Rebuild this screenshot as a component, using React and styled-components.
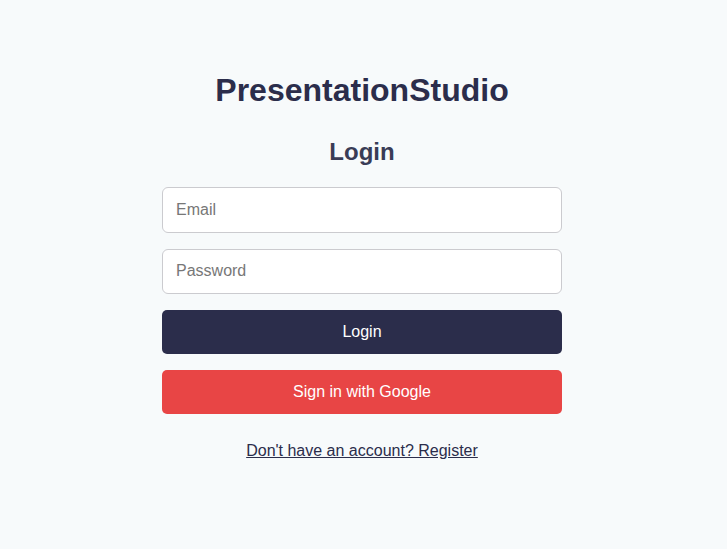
import React from "react";
import styled, { createGlobalStyle } from "styled-components";

const Global = createGlobalStyle`
  html, body { margin: 0; padding: 0; }
  body {
    background: #f7fafb;
    font-family: "Liberation Sans", Arial, sans-serif;
    color: #2b2d4b;
  }
  * { box-sizing: border-box; }
`;

const Page = styled.div`
  min-height: 100vh;
  display: flex;
  justify-content: center;
  padding: 72px 3px 0 0;
`;

const Card = styled.div`
  width: 400px;
  display: flex;
  flex-direction: column;
  align-items: stretch;
`;

const Title = styled.h1`
  margin: 0;
  font-size: 32px;
  font-weight: 700;
  text-align: center;
  color: #2b2d4b;
  line-height: 37px;
`;

const Subtitle = styled.h2`
  margin: 29px 0 21px;
  font-size: 24px;
  font-weight: 700;
  text-align: center;
  color: #393c56;
  line-height: 28px;
`;

const Form = styled.form`
  display: flex;
  flex-direction: column;
  gap: 16px;
`;

const Input = styled.input`
  height: 45.5px;
  width: 100%;
  padding: 0 13px;
  border: 1px solid #cbcbcf;
  border-radius: 6px;
  background: #fff;
  font-family: inherit;
  font-size: 16px;
  color: #2b2d4b;
  outline: none;
  &::placeholder { color: #777; }
`;

const Button = styled.button`
  height: 44px;
  width: 100%;
  border: none;
  border-radius: 5px;
  background: ${(p) => (p.$variant === "google" ? "#e84545" : "#2b2d4b")};
  color: #fff;
  font-family: inherit;
  font-size: 16px;
  cursor: pointer;
`;

const LinkRow = styled.div`
  margin-top: 28px;
  text-align: center;
`;

const Link = styled.a`
  font-size: 16px;
  line-height: 18px;
  color: #2b2d4b;
  text-decoration: underline;
  cursor: pointer;
`;

export default function App() {
  return (
    <>
      <Global />
      <Page>
        <Card>
          <Title>PresentationStudio</Title>
          <Subtitle>Login</Subtitle>
          <Form onSubmit={(e) => e.preventDefault()}>
            <Input type="email" placeholder="Email" />
            <Input type="password" placeholder="Password" />
            <Button type="submit">Login</Button>
            <Button type="button" $variant="google">Sign in with Google</Button>
          </Form>
          <LinkRow>
            <Link>Don't have an account? Register</Link>
          </LinkRow>
        </Card>
      </Page>
    </>
  );
}
